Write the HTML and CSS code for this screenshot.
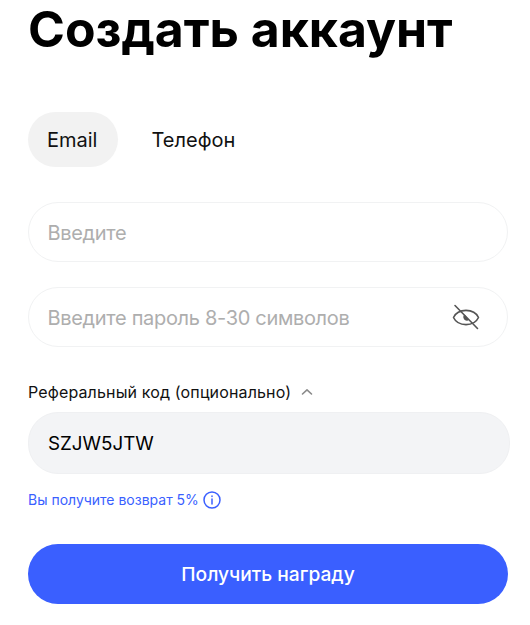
FILE: index.html
```html
<!DOCTYPE html>
<html lang="ru">
<head>
<meta charset="utf-8">
<title>Создать аккаунт</title>
<link rel="stylesheet" href="styles.css">
</head>
<body>
<main class="page">
  <h1 class="title">Создать аккаунт</h1>
  <div class="tabs">
    <button class="tab tab-active">Email</button>
    <button class="tab">Телефон</button>
  </div>
  <div class="field field-email"><span class="placeholder">Введите</span></div>
  <div class="field field-password">
    <span class="placeholder">Введите пароль 8-30 символов</span>
    <svg class="eye" width="28" height="28" viewBox="0 0 28 28" fill="none" stroke="#555" stroke-width="1.6" stroke-linecap="round" stroke-linejoin="round">
      <path d="M1.500 14.500C6 5 22 5 26.500 14.500C22 24 6 24 1.500 14.500Z"/>
      <path d="M12.500 12.500a2.800 2.800 0 0 0 3.200 4.200Z" fill="#555"/>
      <path d="M3 2.500 25.500 25.500"/>
    </svg>
  </div>
  <div class="ref-label">
    <span>Реферальный код (опционально)</span>
    <svg class="chevron" width="12" height="8" viewBox="0 0 12 8" fill="none" stroke="#8a8a8a" stroke-width="1.600" stroke-linecap="round" stroke-linejoin="round"><path d="M1.500 6 6 1.800 10.500 6"/></svg>
  </div>
  <div class="field field-ref">SZJW5JTW</div>
  <div class="cashback">
    <span>Вы получите возврат 5%</span>
    <svg width="18" height="18" viewBox="0 0 18 18" fill="none" stroke="#3a5fff" stroke-width="1.500" stroke-linecap="round"><circle cx="9" cy="9" r="8"/><path d="M9 8v5"/><path d="M9 5v.4"/></svg>
  </div>
  <button class="submit">Получить награду</button>
</main>
</body>
</html>
```

FILE: styles.css
```css
* { box-sizing: border-box; }
html, body { margin: 0; background: #fff; }
body { font-family: Inter, "Liberation Sans", sans-serif; color: #111; overflow: hidden; }
.page { width: 530px; height: 625px; padding: 0 20px 0 28px; display: flex; flex-direction: column; align-items: flex-start; }
.title { margin: 0; font-size: 49.9px; line-height: 58px; font-weight: 700; color: #000; }
.tabs { display: flex; gap: 14px; margin-top: 54px; }
.tab { height: 55px; padding: 0 21px 0 19px; border: 0; border-radius: 28px; background: transparent; font: 400 20px Inter, sans-serif; color: #111; }
.tab-active { background: #f2f2f2; }
.field { width: 480px; height: 60px; border-radius: 30px; border: 1px solid #f1f2f3; padding: 2px 19px 0; display: flex; align-items: center; justify-content: space-between; font-size: 20px; }
.field-email { margin-top: 35px; }
.field-password { margin-top: 25px; }
.placeholder { color: #aeaeae; letter-spacing: -0.32px; margin-left: -0.5px; }
.eye { margin-right: 8px; margin-top: -2px; }
.ref-label { display: flex; align-items: center; gap: 10px; margin-top: 35px; font-size: 16px; letter-spacing: 0.14px; line-height: 20px; color: #111; }
.field-ref { width: 482px; height: 62px; margin-top: 10px; background: #f3f4f6; border-color: #eff0f2; color: #000; font-size: 18.8px; padding-top: 0; }
.cashback { display: flex; align-items: center; gap: 4px; margin-top: 16px; font-size: 14px; line-height: 20px; color: #3a5fff; }
.submit { width: 480px; height: 60px; margin-top: 34px; border: 0; border-radius: 30px; background: #3a5fff; color: #fff; font: 500 19.2px Inter, sans-serif; }
```
